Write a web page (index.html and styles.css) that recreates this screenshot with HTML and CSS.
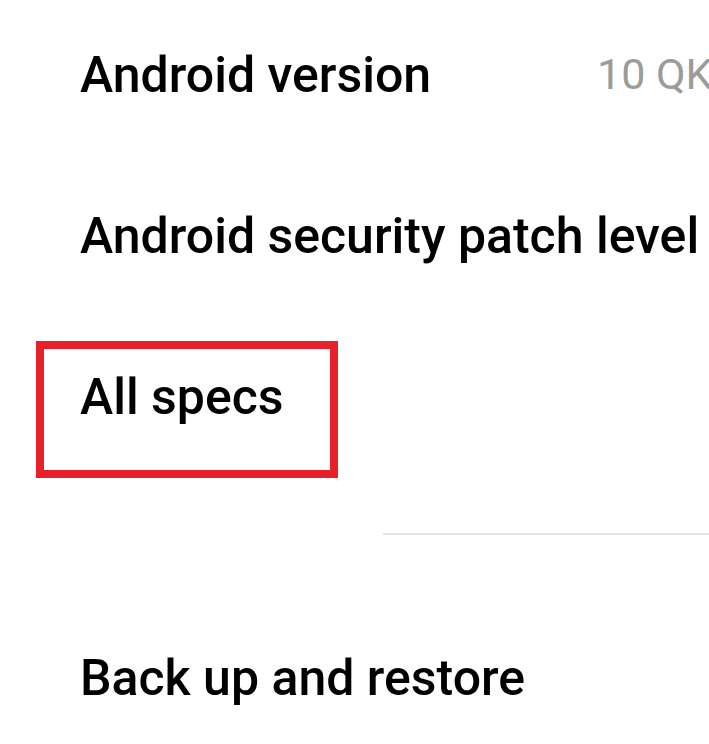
FILE: index.html
```html
<!DOCTYPE html>
<html lang="en">
<head>
<meta charset="utf-8">
<title>About phone</title>
<link rel="stylesheet" href="styles.css">
</head>
<body>
<main class="list">
  <div class="row">
    <span class="title title-fixed">Android version</span>
    <span class="value">10 QK</span>
  </div>
  <div class="row">
    <span class="title">Android security patch level</span>
  </div>
  <div class="row row-marked">
    <span class="title">All specs</span>
    <span class="highlight"></span>
  </div>
  <div class="divider"></div>
  <div class="row">
    <span class="title">Back up and restore</span>
  </div>
</main>
</body>
</html>
```
FILE: styles.css
```css
html, body {
  margin: 0;
  padding: 0;
  background: #ffffff;
  overflow: hidden;
}
body {
  width: 709px;
  height: 744px;
  font-family: Roboto, "Noto Sans", sans-serif;
  color: #000000;
}
.list {
  display: flex;
  flex-direction: column;
  margin-top: -6px;
}
.row {
  height: 161px;
  display: flex;
  align-items: center;
  padding-left: 80px;
  white-space: nowrap;
}
.row-marked {
  position: relative;
}
.title {
  font-size: 50px;
  font-weight: 500;
  line-height: 1;
}
.title-fixed {
  flex: 0 0 517px;
}
.value {
  font-size: 43px;
  font-weight: 400;
  color: #9b9b9b;
  line-height: 1;
}
.highlight {
  position: absolute;
  left: 36px;
  top: 25px;
  width: 286px;
  height: 121px;
  border: 8px solid #e8202a;
}
.divider {
  height: 2px;
  background: #e4e4e4;
  margin: 56px 0 62px 383px;
}
```
